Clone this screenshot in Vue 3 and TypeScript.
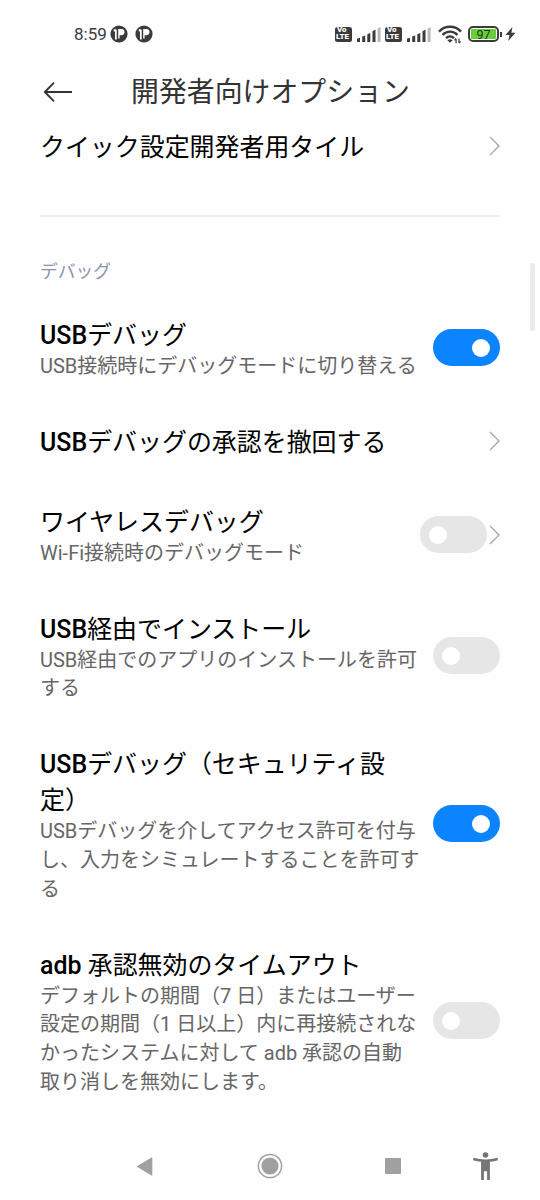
<script setup lang="ts">
import { ref } from 'vue'

interface Item {
  id: string
  title: string[]
  summary?: string
  on?: boolean
  toggle?: boolean
  link?: boolean
}

interface Run {
  text: string
  latin: boolean
}

// Latin words in a title are set in medium weight, Japanese text in regular.
const toRuns = (text: string): Run[] =>
  text
    .split(/([A-Za-z]+)/)
    .filter((part) => part !== '')
    .map((part) => ({ text: part, latin: /^[A-Za-z]+$/.test(part) }))

const items = ref<Item[]>([
  { id: 'usb', title: ['USBデバッグ'], summary: 'USB接続時にデバッグモードに切り替える', toggle: true, on: true },
  { id: 'revoke', title: ['USBデバッグの承認を撤回する'], link: true },
  { id: 'wireless', title: ['ワイヤレスデバッグ'], summary: 'Wi-Fi接続時のデバッグモード', toggle: true, on: false, link: true },
  { id: 'install', title: ['USB経由でインストール'], summary: 'USB経由でのアプリのインストールを許可\nする', toggle: true, on: false },
  {
    id: 'security',
    title: ['USBデバッグ（セキュリティ設', '定）'],
    summary: 'USBデバッグを介してアクセス許可を付与\nし、入力をシミュレートすることを許可す\nる',
    toggle: true,
    on: true,
  },
  {
    id: 'adb',
    title: ['adb 承認無効のタイムアウト'],
    summary: 'デフォルトの期間（7 日）またはユーザー\n設定の期間（1 日以上）内に再接続されな\nかったシステムに対して adb 承認の自動\n取り消しを無効にします。',
    toggle: true,
    on: false,
  },
])
</script>

<template>
  <div class="screen">
    <div class="status">
      <div class="status-left">
        <span class="clock">8:59</span>
        <svg v-for="n in 2" :key="n" class="app-badge" width="18" height="18" viewBox="0 0 18 18">
          <circle cx="9" cy="9" r="8.6" fill="#3b3b3b" />
          <path d="M3.800 4.200h2.600v2.200H3.800zM5 5h1.700v9.500H5z" fill="#fff" />
          <path d="M8.200 4h3.200a3.100 3.100 0 0 1 0 6.200H9.600v3.300H8.200z" fill="#fff" />
        </svg>
      </div>
      <div class="status-right">
        <template v-for="n in 2" :key="n">
          <span class="volte"><span>Vo</span><span>LTE</span></span>
          <svg class="signal" width="24" height="15" viewBox="0 0 24 15">
            <path d="M0 11.7l3-1V15H0zM5.2 9.6l3-1.2V15h-3zM10.3 7.2l3-1.3V15h-3zM15.5 4.3l3-1.7V15h-3z" fill="#3b3b3b" />
            <path d="M20.6 1.4l3-1.4v15h-3z" fill="#b9b9b9" />
          </svg>
        </template>
        <svg class="wifi" width="24" height="19" viewBox="0 0 24 19">
          <g fill="none" stroke="#3b3b3b" stroke-width="2.4">
            <path d="M1 6.600C7 .1 17 .1 23 6.600" />
            <path d="M4.500 10c4.300-4.500 10.700-4.500 15 0" />
            <path d="M8 13.200c2.400-2.300 5.600-2.300 8 0" />
          </g>
          <path d="M9.400 15.200q2.600-2 5.200 0L12 17.800z" fill="#3b3b3b" />
          <path d="M18.100 18.200v-4.500M18.100 13.500l-1.600 1.800M21 13.500v4.500M21 18.200l1.600-1.800" stroke="#3b3b3b" stroke-width="1.2" />
        </svg>
        <span class="battery"><span class="level">97</span></span>
        <svg class="bolt" width="11" height="14" viewBox="0 0 11 14">
          <path d="M7.400 0L.5 8h4L3.200 14l7.300-8.300H6.400z" fill="#3b3b3b" />
        </svg>
      </div>
    </div>

    <header class="header">
      <svg width="30" height="22" viewBox="0 0 30 22">
        <path d="M29 11H2M11 1.700L1.800 11l9.200 9.300" fill="none" stroke="#333" stroke-width="1.9" />
      </svg>
      <h1>開発者向けオプション</h1>
    </header>

    <main class="list">
      <div class="row first">
        <div class="title">クイック設定開発者用タイル</div>
        <svg class="chevron" width="11" height="20" viewBox="0 0 11 20">
          <path d="M1 1l9 9-9 9" fill="none" stroke="#a9a9a9" stroke-width="1.4" />
        </svg>
      </div>
      <div class="divider"></div>
      <div class="category">デバッグ</div>
      <div v-for="item in items" :key="item.id" class="row">
        <div class="texts">
          <div v-for="line in item.title" :key="line" class="title"><span v-for="(run, i) in toRuns(line)" :key="i" :class="{ latin: run.latin }">{{ run.text }}</span></div>
          <div v-if="item.summary" class="summary">{{ item.summary }}</div>
        </div>
        <div class="controls">
          <button
            v-if="item.toggle"
            class="switch"
            :class="{ on: item.on }"
            role="switch"
            :aria-checked="item.on"
            @click="item.on = !item.on"
          >
            <span class="knob"></span>
          </button>
          <svg v-if="item.link" class="chevron" width="11" height="20" viewBox="0 0 11 20">
            <path d="M1 1l9 9-9 9" fill="none" stroke="#a9a9a9" stroke-width="1.4" />
          </svg>
        </div>
      </div>
    </main>

    <nav class="nav">
      <svg width="17" height="19" viewBox="0 0 17 19"><path d="M.5 9.500L15.500.5q.8-.3.8.6v16.800q0 .9-.8.6z" fill="#a0a0a0" /></svg>
      <svg class="home" width="26" height="26" viewBox="0 0 26 26">
        <circle cx="13" cy="13" r="11.600" fill="none" stroke="#a0a0a0" stroke-width="1.5" />
        <circle cx="13" cy="13" r="8.600" fill="#a0a0a0" />
      </svg>
      <svg class="recents" width="16" height="16" viewBox="0 0 16 16"><rect width="16" height="16" rx=".8" fill="#a0a0a0" /></svg>
      <svg class="access" width="25" height="28" viewBox="0 0 25 28">
        <circle cx="12.500" cy="3" r="2.800" fill="#757575" />
        <path d="M.5 5.800q12 3.200 24 0l.5 2.400q-4 1.100-8.100 1.500V28h-2.800v-8.700h-3.200V28H8.100V9.700Q4 9.300 0 8.200z" fill="#757575" />
      </svg>
    </nav>
    <div class="scrollbar"></div>
  </div>
</template>

<style>
html,
body {
  background: #fefefe;
}
</style>

<style scoped>
.screen {
  position: relative;
  box-sizing: border-box;
  width: 540px;
  height: 1200px;
  overflow: hidden;
  display: flex;
  flex-direction: column;
  background: #fefefe;
  font-family: Roboto, 'Noto Sans CJK JP', sans-serif;
}
.status {
  flex: none;
  box-sizing: border-box;
  height: 66px;
  padding: 2px 24px 0 74px;
  display: flex;
  justify-content: space-between;
  align-items: center;
  color: #3b3b3b;
}
.status-left,
.status-right {
  display: flex;
  align-items: center;
}
.clock {
  width: 36px;
  font-size: 17px;
  line-height: 20px;
}
.app-badge + .app-badge {
  margin-left: 7px;
}
.volte {
  width: 17px;
  height: 15px;
  border-radius: 2.5px;
  background: #3b3b3b;
  color: #fff;
  font-size: 8px;
  font-weight: 900;
  line-height: 6.6px;
  display: flex;
  flex-direction: column;
  justify-content: center;
  padding-left: 1px;
  box-sizing: border-box;
}
.volte span:first-child {
  padding-left: 1px;
}
.signal {
  margin: 0 4px 0 5px;
}
.wifi {
  margin: 1px 6px 0 3px;
}
.battery {
  position: relative;
  box-sizing: border-box;
  width: 31px;
  height: 16px;
  padding: 1px;
  border: 2px solid #3b3b3b;
  border-radius: 5px;
}
.battery::after {
  content: '';
  position: absolute;
  left: 30px;
  top: 3.5px;
  width: 2px;
  height: 5px;
  background: #3b3b3b;
}
.level {
  display: block;
  height: 10px;
  border-radius: 1px;
  background: #65ce38;
  color: #223518;
  font-size: 12.5px;
  line-height: 11px;
  text-align: center;
}
.bolt {
  margin-left: 6px;
}
.header {
  flex: none;
  height: 51px;
  padding-left: 43px;
  display: flex;
  align-items: center;
}
.header h1 {
  margin: 3px 0 0 58px;
  font-size: 27.9px;
  font-weight: 400;
  line-height: 40px;
  color: #333;
}
.list {
  flex: 1;
  padding: 0 40px;
}
.row {
  display: flex;
  justify-content: space-between;
  align-items: center;
  padding: 22px 0;
}
.row.first {
  padding: 11px 0 51px;
}
.row.first .title {
  margin: 2px 0 -2px;
}
.divider {
  height: 2px;
  background: #efefef;
}
.category {
  padding: 42px 0 11px;
  font-size: 17.8px;
  line-height: 26px;
  color: #8c93b0;
}
.title {
  font-size: 24.95px;
  font-weight: 400;
  line-height: 36px;
  color: #000;
  white-space: pre;
}
.latin {
  font-weight: 500;
}
.summary {
  margin-top: -2px;
  font-size: 20px;
  line-height: 28.8px;
  color: #666;
  white-space: pre;
}
.texts {
  width: 380px;
}
.controls {
  display: flex;
  align-items: center;
  gap: 2px;
  margin-bottom: 3px;
}
.chevron {
  flex: none;
}
.switch {
  flex: none;
  box-sizing: border-box;
  width: 67px;
  height: 37px;
  padding: 0 10px 0 9px;
  border: 0;
  border-radius: 19px;
  background: #e6e6e6;
  display: flex;
  align-items: center;
}
.switch.on {
  justify-content: flex-end;
  background: #0d84ff;
}
.knob {
  width: 18px;
  height: 18px;
  border-radius: 50%;
  background: #fff;
}
.nav {
  flex: none;
  height: 68px;
  padding-left: 136px;
  display: flex;
  align-items: center;
}
.home {
  margin-left: 104px;
}
.recents {
  margin-left: 102px;
}
.access {
  margin-left: 72px;
}
.scrollbar {
  position: absolute;
  left: 530px;
  top: 263px;
  width: 5px;
  height: 68px;
  border-radius: 2px;
  background: #ebebeb;
}
</style>
